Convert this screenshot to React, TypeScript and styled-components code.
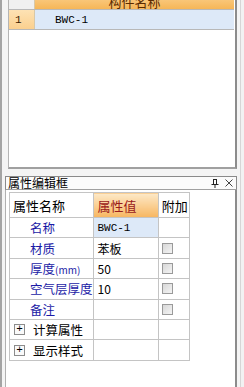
import styled, { createGlobalStyle } from "styled-components";

const Global = createGlobalStyle`
  html, body { margin: 0; padding: 0; }
  body {
    background: #f4f4f4;
    font-family: "Noto Sans CJK SC", "Liberation Sans", sans-serif;
    font-size: 12px;
    color: #000;
  }
`;

const Page = styled.div`
  width: 244px;
  height: 387px;
  display: flex;
  overflow: hidden;
  box-sizing: border-box;
  border-left: 2px solid #a4a4a4;
`;

const MainColumn = styled.div`
  width: 235px;
  display: flex;
  flex-direction: column;
`;

const RightStrip = styled.div`
  flex: 1;
  border-left: 1px solid #d6d6d6;
  margin-left: 3px;
  background: #f2f2f2;
`;

// top list
const ListPanel = styled.div`
  margin-left: 6px;
  height: 169px;
  box-sizing: border-box;
  background: #fff;
  border-left: 1px solid #b4b4b4;
  border-right: 2px solid #8c8c8c;
  border-bottom: 2px solid #a0a0a0;
`;

const ListRow = styled.div<{ $h: number }>`
  display: flex;
  height: ${(p) => p.$h}px;
  border-bottom: 1px solid #b8b8b8;
  margin-right: 1px;
`;

const RowHead = styled.div<{ $top?: boolean }>`
  width: 26px;
  box-sizing: border-box;
  padding-left: 6px;
  display: flex;
  align-items: center;
  border-right: 1px solid #d8c8a8;
  background: ${(p) =>
    p.$top ? "#f0f0f0" : "linear-gradient(#fde2b4, #fbd08f)"};
  color: #3a1a00;
  font-family: "Liberation Mono", monospace;
  font-size: 11px;
`;

const HeadCell = styled.div`
  flex: 1;
  display: flex;
  justify-content: center;
  align-items: flex-end;
  overflow: hidden;
  background: linear-gradient(#f9c678, #f6b658);
  color: #5a2a00;
  line-height: 15px;
  font-size: 13px;
`;

const NameCell = styled.div`
  flex: 1;
  display: flex;
  align-items: center;
  padding-left: 20px;
  background: #dde9f8;
  font-family: "Liberation Mono", monospace;
  font-size: 11px;
`;

// property dock
const DockTitle = styled.div`
  margin: 7px 0 0 3px;
  height: 14px;
  box-sizing: border-box;
  border: 1px solid #8a8a8a;
  border-bottom-color: #a0a0a0;
  background: #fbfbfb;
  display: flex;
  align-items: center;
  padding-left: 2px;
  font-size: 12px;
  line-height: 12px;
`;

const DockTitleText = styled.span`
  flex: 1;
`;

const DockButton = styled.span`
  width: 14px;
  display: flex;
  justify-content: center;
  color: #333;
`;

const DockBody = styled.div`
  flex: 1;
  margin-left: 3px;
  background: #fff;
  border-left: 1px solid #b0b0b0;
  border-right: 2px solid #8c8c8c;
  padding: 2px 0 0 3px;
`;

const Grid = styled.table`
  border-collapse: collapse;
  table-layout: fixed;
  width: 181px;
  td {
    border: 1px solid #c4c4c4;
    height: 19.4px;
    padding: 0;
    white-space: nowrap;
    overflow: hidden;
  }
`;

const HeadTd = styled.td<{ $active?: boolean }>`
  && {
    height: 24px;
  }
  padding-left: 3px !important;
  font-size: 13px;
  background: ${(p) => (p.$active ? "linear-gradient(#fde9c8, #f7b660)" : "#fff")};
  color: ${(p) => (p.$active ? "#9a1a1a" : "#000")};
`;

const KeyTd = styled.td`
  padding-left: 20px !important;
  color: #1a1aa6;
  font-size: 12.5px;
`;

const Small = styled.span`
  font-size: 10px;
`;

const ValueTd = styled.td<{ $selected?: boolean; $mono?: boolean }>`
  padding-left: 3px !important;
  background: ${(p) => (p.$selected ? "#dde9f8" : "#fff")};
  font-family: ${(p) =>
    p.$mono ? '"Liberation Mono", monospace' : '"Noto Sans CJK SC", "Liberation Sans", sans-serif'};
  font-size: ${(p) => (p.$mono ? "11px" : "12px")};
`;

const CheckTd = styled.td`
  padding-left: 3px !important;
`;

const CheckBox = styled.span`
  display: block;
  width: 11px;
  height: 11px;
  box-sizing: border-box;
  border: 1px solid #9a9a9a;
  background: linear-gradient(135deg, #d8d8d8, #f4f4f4);
`;

const GroupTd = styled.td`
  padding-left: 4px !important;
  font-size: 12.5px;
`;

const GroupInner = styled.span`
  display: flex;
  align-items: center;
  gap: 8px;
`;

const PlusBox = styled.span`
  width: 11px;
  height: 11px;
  box-sizing: border-box;
  border: 1px solid #8c8c8c;
  background: #fafafa;
  display: flex;
  align-items: center;
  justify-content: center;
  font-family: "Liberation Mono", monospace;
  font-size: 11px;
  line-height: 9px;
`;

const props = [
  { key: "名称", value: "BWC-1", mono: true, selected: true, check: false },
  { key: "材质", value: "苯板", check: true },
  { key: "厚度", unit: "(mm)", value: "50", check: true },
  { key: "空气层厚度", value: "10", check: true },
  { key: "备注", value: "", check: true },
];

export default function App() {
  return (
    <>
      <Global />
      <Page>
        <MainColumn>
          <ListPanel>
            <ListRow $h={9}>
              <RowHead $top />
              <HeadCell>构件名称</HeadCell>
            </ListRow>
            <ListRow $h={19}>
              <RowHead>1</RowHead>
              <NameCell>BWC-1</NameCell>
            </ListRow>
          </ListPanel>
          <DockTitle>
            <DockTitleText>属性编辑框</DockTitleText>
            <DockButton>
              <svg width="8" height="9" viewBox="0 0 8 9">
                <path d="M2 0.5h4M2.5 0.5v5M5.5 0.5v5M0.5 5.5h7M4 5.5v3.5" stroke="#222" fill="none" />
              </svg>
            </DockButton>
            <DockButton>
              <svg width="8" height="8" viewBox="0 0 8 8">
                <path d="M0.5 0.5l7 7M7.5 0.5l-7 7" stroke="#444" fill="none" />
              </svg>
            </DockButton>
          </DockTitle>
          <DockBody>
            <Grid>
              <colgroup>
                <col style={{ width: 84 }} />
                <col style={{ width: 64 }} />
                <col style={{ width: 31 }} />
              </colgroup>
              <tbody>
                <tr>
                  <HeadTd>属性名称</HeadTd>
                  <HeadTd $active>属性值</HeadTd>
                  <HeadTd>附加</HeadTd>
                </tr>
                {props.map((p) => (
                  <tr key={p.key}>
                    <KeyTd>
                      {p.key}
                      {p.unit && <Small>{p.unit}</Small>}
                    </KeyTd>
                    <ValueTd $selected={p.selected} $mono={p.mono}>
                      {p.value}
                    </ValueTd>
                    <CheckTd>{p.check && <CheckBox />}</CheckTd>
                  </tr>
                ))}
                {["计算属性", "显示样式"].map((g) => (
                  <tr key={g}>
                    <GroupTd>
                      <GroupInner>
                        <PlusBox>+</PlusBox>
                        {g}
                      </GroupInner>
                    </GroupTd>
                    <td />
                    <td />
                  </tr>
                ))}
              </tbody>
            </Grid>
          </DockBody>
        </MainColumn>
        <RightStrip />
      </Page>
    </>
  );
}
